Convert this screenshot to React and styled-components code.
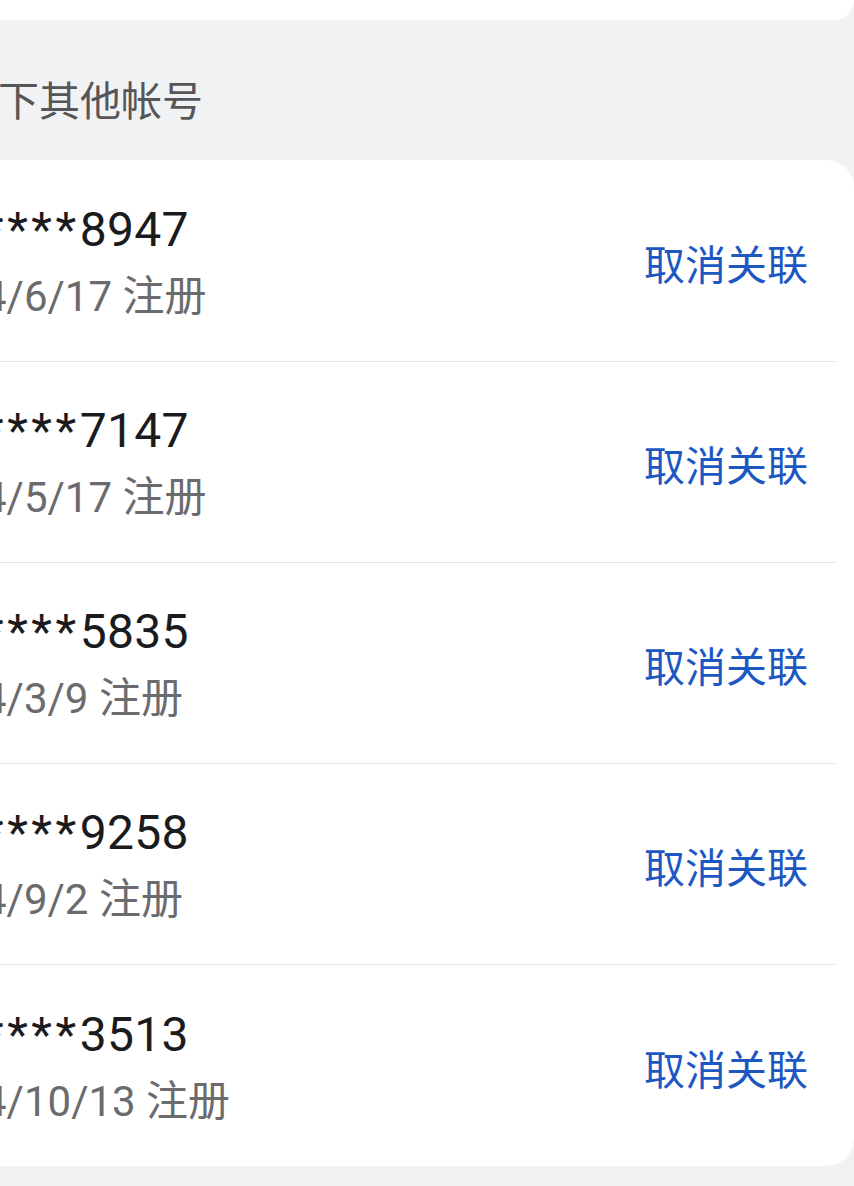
import React from 'react'
import styled, { createGlobalStyle } from 'styled-components'

const GlobalStyle = createGlobalStyle`
  html, body {
    margin: 0;
    padding: 0;
    background: #f1f2f4;
    overflow-x: hidden;
  }
  body {
    font-family: Roboto, "Noto Sans CJK SC", "Noto Sans", sans-serif;
  }
`

const Viewport = styled.div`
  width: 854px;
  height: 1186px;
  overflow: hidden;
`

const Content = styled.div`
  margin-left: -60px;
  width: 914px;
`

const TopCard = styled.div`
  height: 20px;
  background: #ffffff;
  border-radius: 0 0 28px 28px;
`

const SectionTitle = styled.div`
  height: 124px;
  padding: 16px 0 0 58px;
  display: flex;
  align-items: center;
  font-family: "Noto Sans CJK SC", sans-serif;
  font-size: 41px;
  color: #565658;
`

const Card = styled.div`
  background: #ffffff;
  border-radius: 28px;
  padding-top: 1px;
`

const Row = styled.div`
  height: 201px;
  box-sizing: border-box;
  margin-right: 19px;
  padding: 2px 27px 0 43px;
  display: flex;
  align-items: center;
  justify-content: space-between;
  border-bottom: ${props => (props.last ? 'none' : '1px solid #e3e3e5')};
`

const Info = styled.div`
  display: flex;
  flex-direction: column;
`

const Account = styled.div`
  font-size: 48px;
  line-height: 56px;
  color: #1b1b1d;
  letter-spacing: 0.3px;
  white-space: nowrap;
`

const Mask = styled.span`
  letter-spacing: 3.5px;
`

const RegDate = styled.div`
  margin-top: 14px;
  font-size: 42px;
  line-height: 50px;
  color: #6b6b6d;
  white-space: nowrap;
`

const Unlink = styled.button`
  border: none;
  background: none;
  padding: 0;
  font-family: "Noto Sans CJK SC", sans-serif;
  font-size: 41px;
  color: #1d57c2;
  cursor: pointer;
`

const accounts = [
  { id: 1, tail: '8947', date: '4/6/17' },
  { id: 2, tail: '7147', date: '4/5/17' },
  { id: 3, tail: '5835', date: '4/3/9' },
  { id: 4, tail: '9258', date: '4/9/2' },
  { id: 5, tail: '3513', date: '4/10/13' },
]

const App = () => {
  return (
    <Viewport>
      <GlobalStyle />
      <Content>
        <TopCard />
        <SectionTitle>下其他帐号</SectionTitle>
        <Card>
          {accounts.map((acc, i) => (
            <Row key={acc.id} last={i === accounts.length - 1}>
              <Info>
                <Account>
                  <Mask>****</Mask>
                  {acc.tail}
                </Account>
                <RegDate>{acc.date} 注册</RegDate>
              </Info>
              <Unlink>取消关联</Unlink>
            </Row>
          ))}
        </Card>
      </Content>
    </Viewport>
  )
}

export default App
